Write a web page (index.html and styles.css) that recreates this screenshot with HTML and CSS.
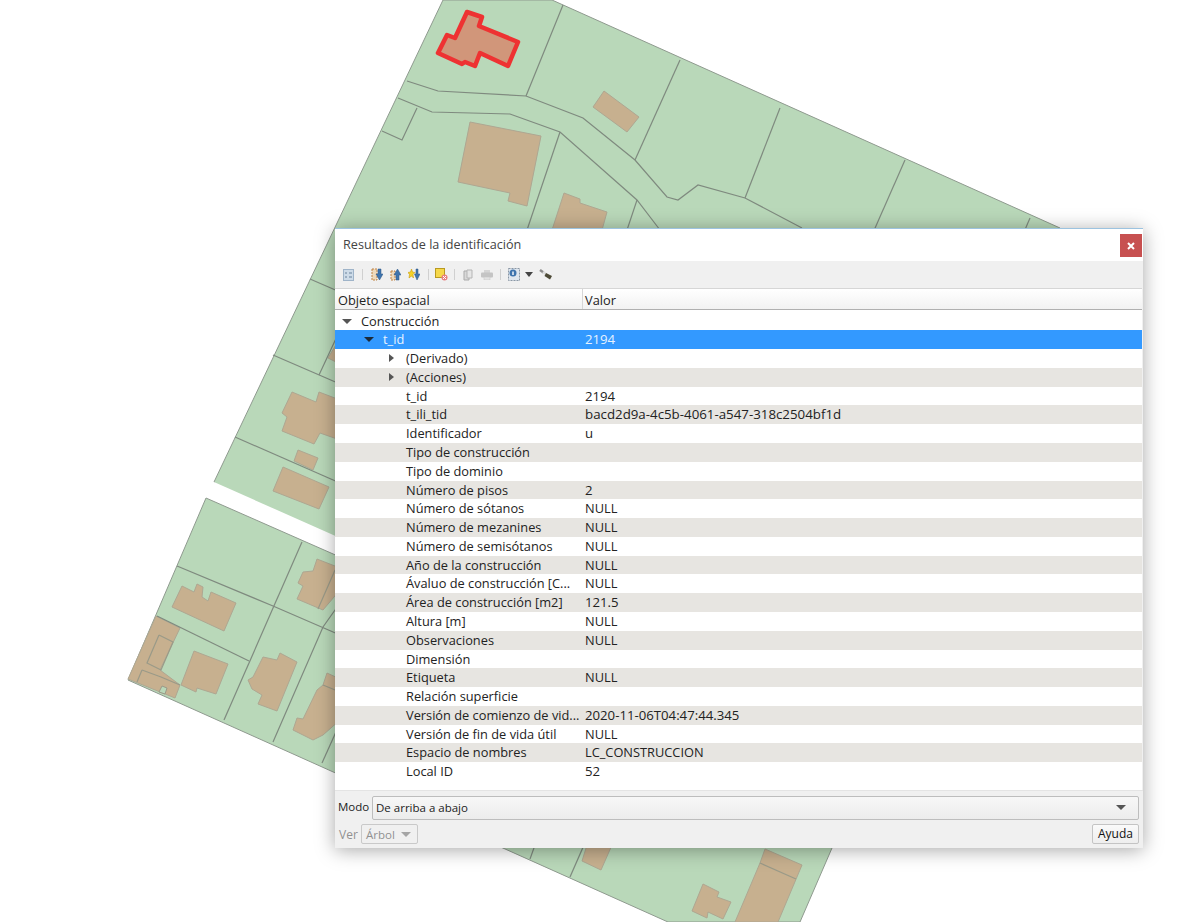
FILE: index.html
```html
<!DOCTYPE html>
<html lang="es">
<head>
  <meta charset="UTF-8" />
  <title>Resultados de la identificación</title>
  <link rel="stylesheet" href="styles.css">
</head>
<body>

  <svg class="map" width="1182" height="922" viewBox="0 0 1182 922">
    <!-- parcels -->
    <polygon class="land" points="443,0 552,0 1060,228 1060,600 335,600 214,482" />
    <polygon class="gap" points="214,482 340,538 340,600 190,600" />
    <polygon class="land" points="206,498 340,557 900,700 832,848 800,922 668,922 128,680" />

    <!-- buildings -->
    <polygon class="bld" points="604,91 639,117 627,132 593,107" />
    <polygon class="bld" points="470,122 541,136 527,206 508,201 510,193 458,182" />
    <polygon class="bld" points="564,193 580,199 580,203 607,212 602,230 552,230" />
    <polygon class="bld" points="292,392 316,402 319,392 340,400 340,440 320,433 314,444 282,431 287,417 282,413" />
    <polygon class="bld" points="340,338 328,358 340,364" />
    <polygon class="bld" points="298,450 318,458 313,470 294,461" />
    <polygon class="bld" points="283,467 329,487 319,509 273,491" />
    <polygon class="bld" points="182,586 194,592 197,584 203,587 202,597 208,601 211,592 236,603 224,631 172,607" />
    <polygon class="bld" points="194,651 228,664 216,694 197,688 196,692 181,685" />
    <polygon class="bld" points="280,653 297,662 277,711 258,704 262,695 252,689 248,680 253,677 263,657 277,660" />
    <polygon class="bld" points="317,559 340,568 340,590 323,610 297,599 303,586 298,583 303,572 313,571" />
    <polygon class="bld" points="327,673 340,679 340,720 323,735 313,740 293,730 297,718 303,719 317,690 323,685" />
    <polygon class="bld" points="156,616 180,628 160,670 180,685 175,698 128,679" />
    <polygon class="land-in" points="162,686 167,688 165,694 159,692" />
    <polygon class="bld" points="587,845 612,845 601,870 582,861" />
    <polygon class="bld" points="703,884 719,892 717,897 731,902 723,919 708,912 707,918 692,911" />
    <polygon class="bld" points="765,849 802,865 778,922 735,922 760,863" />

    <!-- parcel lines -->
    <polyline class="ln" points="563,5 526,96" />
    <polyline class="ln" points="407,81 438,91 526,96 583,118 635,160 667,197 678,200 698,185 745,198 802,228" />
    <polyline class="ln" points="398,98 432,112 510,114 560,132 637,200 660,230" />
    <polyline class="ln" points="417,108 402,140 382,131" />
    <polyline class="ln" points="560,132 527,230" />
    <polyline class="ln" points="680,60 635,160" />
    <polyline class="ln" points="637,200 627,230" />
    <polyline class="ln" points="780,108 745,198" />
    <polyline class="ln" points="905,160 872,235" />
    <polyline class="ln" points="1030,218 1024,232" />
    <polyline class="ln" points="310,279 340,292" />
    <polyline class="ln" points="273,355 340,384" />
    <polyline class="ln" points="319,375 340,330" />
    <polyline class="ln" points="235,437 340,483" />
    <polyline class="ln" points="177,566 273,606 340,635" />
    <polyline class="ln" points="302,542 224,720" />
    <polyline class="ln" points="157,616 249,661" />
    <polyline class="ln" points="340,603 323,627 273,742" />
    <polyline class="ln" points="322,763 340,723" />
    <polyline class="ln" points="535,845 530,859" />
    <polyline class="ln" points="584,845 570,877" />
    <polyline class="ln-b" points="159,635 173,642 161,670 147,663 159,635" />
    <polyline class="ln-b" points="142,670 161,677 180,685" />
    <polyline class="ln-b" points="142,670 137,682" />
    <polyline class="ln-b" points="335,570 318,609" />
    <polyline class="ln-b" points="323,685 340,692" />
    <polyline class="ln-b" points="760,863 796,879" />

    <!-- selected feature -->
    <polygon class="sel" points="467,12 482,17 479,26 518,42 508,66 480,53 475,66 465,62 462,64 438,53 447,35 455,38" />
  </svg>

  <div class="dialog">
    <div class="titlebar">
      <span class="title">Resultados de la identificación</span>
      <div class="close">
        <svg width="8" height="8" viewBox="0 0 8 8"><path d="M1 1 7 7M7 1 1 7" stroke="#fff" stroke-width="2" /></svg>
      </div>
    </div>

    <div class="toolbar">
      <svg class="ic i1" width="11" height="12" viewBox="0 0 11 12"><rect x=".5" y=".5" width="10" height="11" fill="#cddbe8" stroke="#9fb4c9" /><path d="M2 4h2M2 8h2M6 4h3M6 8h3" stroke="#6a839c" /></svg>
      <span class="sep s1"></span>
      <svg class="ic i2" width="12" height="13" viewBox="0 0 12 13"><path d="M1 1h5v11H1z" fill="#efd9bb" stroke="#c08344" stroke-dasharray="2 1" /><path d="M7 1h3v5h2L8.500 12 5 6h2z" fill="#3f74ad" stroke="#2d5584" stroke-width=".5" /></svg>
      <svg class="ic i3" width="11" height="13" viewBox="0 0 11 13"><path d="M1 3h4v9H1z" fill="#efd9bb" stroke="#c08344" stroke-dasharray="2 1" /><path d="M6 12V7H4L7.500 1 11 7H9v5z" fill="#3f74ad" stroke="#2d5584" stroke-width=".5" /></svg>
      <svg class="ic i4" width="12" height="13" viewBox="0 0 12 13"><path d="M3.500 1 4.500 4 7 4.500 5 6.500 5.500 10 3.500 8 1 10 1.500 6.500 0 4.500 2.500 4z" fill="#f5d327" stroke="#c89a10" stroke-width=".6" /><path d="M8 1h2v5h2L9 12 6.500 6H8z" fill="#3f74ad" stroke="#2d5584" stroke-width=".5" /></svg>
      <span class="sep s2"></span>
      <svg class="ic i5" width="13" height="13" viewBox="0 0 13 13"><rect x=".5" y=".5" width="9" height="9" fill="#f6d84a" stroke="#b99a20" /><circle cx="9.500" cy="9.500" r="3" fill="#e77f7f" /><path d="M8 8l3 3M11 8l-3 3" stroke="#fff" /></svg>
      <span class="sep s3"></span>
      <svg class="ic i6" width="10" height="12" viewBox="0 0 10 12"><path d="M1 2h5v9H1z" fill="#d8d8d8" stroke="#aaa" /><path d="M4 1h5v8H4z" fill="#e6e6e6" stroke="#b5b5b5" /></svg>
      <svg class="ic i7" width="12" height="10" viewBox="0 0 12 10"><rect x="3" y="0" width="6" height="3" fill="#d5d5d5" /><rect x="0" y="2.500" width="12" height="5" rx="1" fill="#c4c4c4" /><rect x="3" y="7" width="6" height="3" fill="#e2e2e2" stroke="#c4c4c4" stroke-width=".5" /></svg>
      <span class="sep s4"></span>
      <svg class="ic i8" width="12" height="13" viewBox="0 0 12 13"><rect x=".5" y=".5" width="11" height="12" fill="#dfe6ee" stroke="#8a97a5" stroke-dasharray="2 1" /><circle cx="5" cy="5" r="3.500" fill="#3f74ad" /><rect x="4.300" y="3.500" width="1.400" height="3.500" fill="#fff" /></svg>
      <span class="drop"></span>
      <svg class="ic i9" width="14" height="11" viewBox="0 0 14 11"><path d="M1 1 4.500 3.500" stroke="#8c8c8c" stroke-width="2.500" /><path d="M4 3 8 6" stroke="#dcdcdc" stroke-width="2.500" /><path d="M7 4 13 7 11 10.500 5.500 7z" fill="#4d4a36" /></svg>
    </div>

    <div class="tree">
      <div class="head">
        <div class="head-name">Objeto espacial</div>
        <div class="head-value">Valor</div>
      </div>
      <div class="rows">
        <div class="row"><div class="name lvl0"><span class="arrow-down"></span>Construcción</div><div class="value"></div></div>
        <div class="row selected"><div class="name lvl1"><span class="arrow-down"></span>t_id</div><div class="value">2194</div></div>
        <div class="row"><div class="name lvl2"><span class="arrow-right"></span>(Derivado)</div><div class="value"></div></div>
        <div class="row alt"><div class="name lvl2"><span class="arrow-right"></span>(Acciones)</div><div class="value"></div></div>
        <div class="row"><div class="name lvl2">t_id</div><div class="value">2194</div></div>
        <div class="row alt"><div class="name lvl2">t_ili_tid</div><div class="value hex">bacd2d9a-4c5b-4061-a547-318c2504bf1d</div></div>
        <div class="row"><div class="name lvl2">Identificador</div><div class="value">u</div></div>
        <div class="row alt"><div class="name lvl2">Tipo de construcción</div><div class="value"></div></div>
        <div class="row"><div class="name lvl2">Tipo de dominio</div><div class="value"></div></div>
        <div class="row alt"><div class="name lvl2">Número de pisos</div><div class="value">2</div></div>
        <div class="row"><div class="name lvl2">Número de sótanos</div><div class="value caps">NULL</div></div>
        <div class="row alt"><div class="name lvl2">Número de mezanines</div><div class="value caps">NULL</div></div>
        <div class="row"><div class="name lvl2">Número de semisótanos</div><div class="value caps">NULL</div></div>
        <div class="row alt"><div class="name lvl2">Año de la construcción</div><div class="value caps">NULL</div></div>
        <div class="row"><div class="name lvl2">Ávaluo de construcción [C...</div><div class="value caps">NULL</div></div>
        <div class="row alt"><div class="name lvl2">Área de construcción [m2]</div><div class="value">121.5</div></div>
        <div class="row"><div class="name lvl2">Altura [m]</div><div class="value caps">NULL</div></div>
        <div class="row alt"><div class="name lvl2">Observaciones</div><div class="value caps">NULL</div></div>
        <div class="row"><div class="name lvl2">Dimensión</div><div class="value"></div></div>
        <div class="row alt"><div class="name lvl2">Etiqueta</div><div class="value caps">NULL</div></div>
        <div class="row"><div class="name lvl2">Relación superficie</div><div class="value"></div></div>
        <div class="row alt"><div class="name lvl2">Versión de comienzo de vid...</div><div class="value">2020-11-06T04:47:44.345</div></div>
        <div class="row"><div class="name lvl2">Versión de fin de vida útil</div><div class="value caps">NULL</div></div>
        <div class="row alt"><div class="name lvl2">Espacio de nombres</div><div class="value caps">LC_CONSTRUCCION</div></div>
        <div class="row"><div class="name lvl2">Local ID</div><div class="value">52</div></div>
      </div>
    </div>

    <div class="footer">
      <div class="mode-line">
        <span class="mode-label">Modo</span>
        <div class="combo"><span>De arriba a abajo</span><span class="combo-arrow"></span></div>
      </div>
      <div class="view-line">
        <span class="view-label">Ver</span>
        <div class="view-btn"><span>Árbol</span><span class="view-arrow"></span></div>
        <div class="help-btn">Ayuda</div>
      </div>
    </div>
  </div>

</body>
</html>
```
FILE: styles.css
```css
html, body {
  margin: 0;
  padding: 0;
}
body {
  position: relative;
  width: 1182px;
  height: 922px;
  overflow: hidden;
  background: #fff;
  font-family: "Open Sans", "Noto Sans", sans-serif;
  font-size: 12px;
  color: #222;
}
.map {
  position: absolute;
  left: 0;
  top: 0;
  filter: blur(0.5px);
}
.land {
  fill: #b9d8b9;
  stroke: #8f9a8f;
  stroke-width: 1;
}
.gap {
  fill: #fff;
}
.land-in {
  fill: #b9d8b9;
  stroke: #9a9a88;
  stroke-width: 1;
}
.bld {
  fill: #c7b08f;
  stroke: #aea792;
  stroke-width: 1;
}
.ln {
  fill: none;
  stroke: #7f8a7f;
  stroke-width: 1.2;
}
.ln-b {
  fill: none;
  stroke: #9a9a88;
  stroke-width: 1.2;
}
.sel {
  fill: #d1967a;
  stroke: #ee3232;
  stroke-width: 4.5;
  stroke-linejoin: round;
}
.dialog {
  position: absolute;
  left: 335px;
  top: 228px;
  width: 808px;
  height: 620px;
  display: flex;
  flex-direction: column;
  background: #f0f0f0;
  box-shadow: 0 2px 18px rgba(0,0,0,0.35);
  border-top: 1px solid #9cc3e0;
  box-sizing: border-box;
}
.titlebar {
  height: 32px;
  background: #fff;
  display: flex;
  align-items: center;
  justify-content: space-between;
  flex-shrink: 0;
}
.title {
  margin-left: 8px;
  margin-top: -2px;
  font-size: 12.65px;
  color: #444;
}
.close {
  width: 22px;
  height: 23px;
  margin-right: 1px;
  margin-top: 1px;
  background: #c75050;
  display: flex;
  align-items: center;
  justify-content: center;
}
.toolbar {
  height: 27px;
  flex-shrink: 0;
  display: flex;
  align-items: center;
  padding-left: 8px;
  background: #f0f0f0;
}
.ic {
  display: block;
  flex-shrink: 0;
}
.sep {
  width: 1px;
  height: 11px;
  background: #d0d0d0;
  flex-shrink: 0;
}
.s1 { margin-left: 8px; }
.i2 { margin-left: 8px; }
.i3 { margin-left: 7px; }
.i4 { margin-left: 7px; }
.s2 { margin-left: 8px; }
.i5 { margin-left: 6px; }
.s3 { margin-left: 6px; }
.i6 { margin-left: 8px; }
.i7 { margin-left: 8px; }
.s4 { margin-left: 7px; }
.i8 { margin-left: 7px; }
.drop {
  width: 0;
  height: 0;
  margin-left: 5px;
  border-left: 4.5px solid transparent;
  border-right: 4.5px solid transparent;
  border-top: 5px solid #444;
}
.i9 { margin-left: 6px; }
.tree {
  flex: 1;
  display: flex;
  flex-direction: column;
  margin-right: 1px;
  background: #fff;
  min-height: 0;
  font-size: 12.8px;
}
.head {
  height: 22px;
  flex-shrink: 0;
  display: flex;
  background: linear-gradient(#fff, #f2f2f2);
  border-top: 1px solid #d6d6d6;
  border-bottom: 1px solid #b0b0b0;
  box-sizing: border-box;
  color: #222;
}
.head-name {
  width: 248px;
  padding-left: 3px;
  box-sizing: border-box;
  line-height: 22px;
  border-right: 1px solid #d6d6d6;
}
.head-value {
  padding-left: 2px;
  line-height: 22px;
}
.rows {
  flex: 1;
  padding-top: 1.500px;
}
.row {
  display: flex;
  height: 18.79px;
  line-height: 18px;
  white-space: nowrap;
}
.row.alt {
  background: #e7e5e1;
}
.row.selected {
  background: #3399ff;
  color: #e6f2ff;
}
.name {
  width: 250px;
  position: relative;
  box-sizing: border-box;
}
.value {
  font-size: 13.2px;
}
.value.hex {
  font-size: 13.3px;
}
.value.caps {
  font-size: 12.8px;
}
.lvl0 { padding-left: 26px; }
.lvl1 { padding-left: 48px; }
.lvl2 { padding-left: 71px; }
.arrow-down {
  position: absolute;
  top: 7px;
  width: 0;
  height: 0;
  border-left: 5px solid transparent;
  border-right: 5px solid transparent;
  border-top: 5px solid #555;
}
.lvl0 .arrow-down { left: 7px; }
.lvl1 .arrow-down { left: 29px; border-top-color: #1c2a3a; }
.arrow-right {
  position: absolute;
  left: 54px;
  top: 5px;
  width: 0;
  height: 0;
  border-top: 4.500px solid transparent;
  border-bottom: 4.500px solid transparent;
  border-left: 5px solid #555;
}
.footer {
  height: 58px;
  flex-shrink: 0;
  box-sizing: border-box;
  padding: 5px 4px 5px 3px;
  display: flex;
  flex-direction: column;
  border-top: 1px solid #e4e4e4;
}
.mode-line {
  display: flex;
  align-items: center;
  height: 24px;
}
.mode-label {
  width: 34px;
  flex-shrink: 0;
  font-size: 11.5px;
  line-height: 22px;
  height: 24px;
}
.combo {
  flex: 1;
  height: 24px;
  box-sizing: border-box;
  border: 1px solid #bdbdbd;
  border-radius: 2px;
  background: linear-gradient(#f7f7f7, #ececec);
  padding: 0 12px 2px 3px;
  display: flex;
  align-items: center;
  justify-content: space-between;
  font-size: 11.5px;
}
.combo-arrow {
  width: 0;
  height: 0;
  border-left: 5px solid transparent;
  border-right: 5px solid transparent;
  border-top: 5px solid #555;
}
.view-line {
  display: flex;
  align-items: center;
  margin-top: 4px;
  height: 20px;
  color: #909090;
}
.view-label {
  width: 22px;
  margin-left: 1px;
  flex-shrink: 0;
}
.view-btn {
  width: 57px;
  height: 20px;
  box-sizing: border-box;
  border: 1px solid #c9c9c9;
  border-radius: 2px;
  padding: 0 6px 0 4px;
  display: flex;
  align-items: center;
  justify-content: space-between;
  font-size: 11.5px;
}
.view-arrow {
  width: 0;
  height: 0;
  border-left: 5px solid transparent;
  border-right: 5px solid transparent;
  border-top: 5px solid #a5a5a5;
}
.help-btn {
  margin-left: auto;
  width: 47px;
  height: 20px;
  box-sizing: border-box;
  border: 1px solid #c4c4c4;
  border-radius: 2px;
  background: linear-gradient(#fafafa, #eeeeee);
  color: #111;
  text-align: center;
  line-height: 18px;
}
```
